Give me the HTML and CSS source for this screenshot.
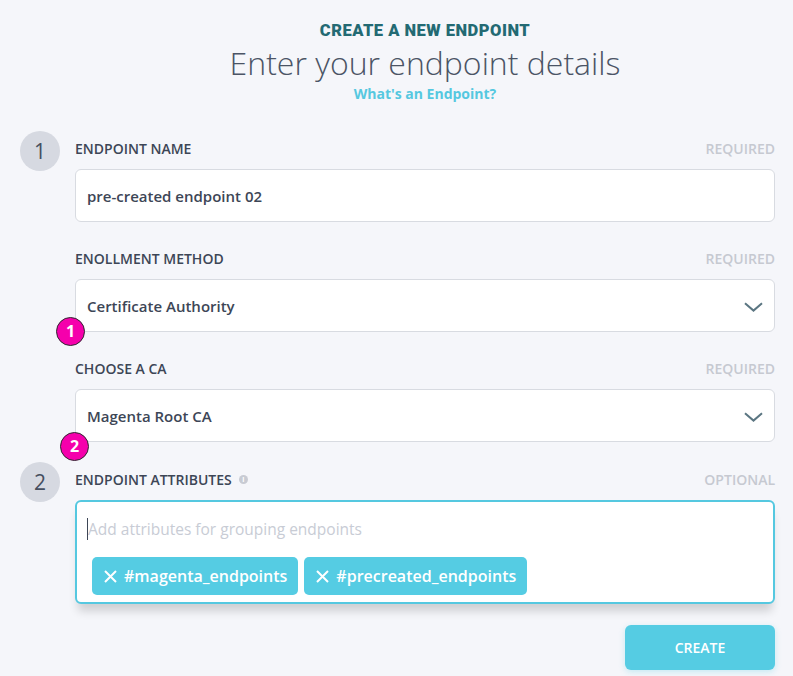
FILE: index.html
```html
<!DOCTYPE html>
<html>
<head>
<meta charset="utf-8">
<link rel="stylesheet" href="styles.css">
</head>
<body>
<div class="page">
  <header class="header">
    <div class="eyebrow">CREATE A NEW ENDPOINT</div>
    <h1 class="title">Enter your endpoint details</h1>
    <a class="help-link">What's an Endpoint?</a>
  </header>

  <section class="step">
    <div class="step-num">1</div>
    <div class="step-fields">
      <div class="field">
        <div class="field-head"><span class="label">ENDPOINT NAME</span><span class="hint">REQUIRED</span></div>
        <div class="input">pre-created endpoint 02</div>
      </div>
      <div class="field">
        <div class="field-head"><span class="label">ENOLLMENT METHOD</span><span class="hint">REQUIRED</span></div>
        <div class="input select">Certificate Authority
          <svg class="chevron" width="19" height="10" viewBox="0 0 19 10"><path d="M1 1.2 L9.5 8.6 L18 1.2" fill="none" stroke="#5b7682" stroke-width="2"/></svg>
          <span class="badge badge-1">1</span>
        </div>
      </div>
      <div class="field">
        <div class="field-head"><span class="label">CHOOSE A CA</span><span class="hint">REQUIRED</span></div>
        <div class="input select">Magenta Root CA
          <svg class="chevron" width="19" height="10" viewBox="0 0 19 10"><path d="M1 1.2 L9.5 8.6 L18 1.2" fill="none" stroke="#5b7682" stroke-width="2"/></svg>
          <span class="badge badge-2">2</span>
        </div>
      </div>
    </div>
  </section>

  <section class="step">
    <div class="step-num">2</div>
    <div class="step-fields">
      <div class="field">
        <div class="field-head"><span class="label">ENDPOINT ATTRIBUTES <span class="info">i</span></span><span class="hint">OPTIONAL</span></div>
        <div class="tag-box">
          <div class="placeholder"><span class="caret"></span>Add attributes for grouping endpoints</div>
          <div class="tags">
            <span class="tag"><svg class="x" width="13" height="13" viewBox="0 0 13 13"><path d="M1 1 L12 12 M12 1 L1 12" stroke="#fff" stroke-width="2"/></svg>#magenta_endpoints</span>
            <span class="tag"><svg class="x" width="13" height="13" viewBox="0 0 13 13"><path d="M1 1 L12 12 M12 1 L1 12" stroke="#fff" stroke-width="2"/></svg>#precreated_endpoints</span>
          </div>
        </div>
      </div>
    </div>
  </section>

  <div class="actions">
    <button class="btn">CREATE</button>
  </div>
</div>
</body>
</html>
```

FILE: styles.css
```css
* { box-sizing: border-box; }
html, body {
  margin: 0;
  background: #f5f6fa;
  font-family: "Open Sans", "Liberation Sans", sans-serif;
  color: #3d4656;
}
.page {
  width: 793px;
  height: 676px;
  overflow: hidden;
  padding: 0 18px 0 20px;
}
.header {
  text-align: center;
  padding-top: 21px;
  margin-left: 55px;
}
.eyebrow {
  font-family: Roboto, "DejaVu Sans", sans-serif;
  font-weight: 900;
  font-size: 16.5px;
  line-height: 20px;
  letter-spacing: 0.5px;
  color: #236a73;
}
.title {
  margin: 4px 0 0;
  font-weight: 300;
  font-size: 32px;
  line-height: 36px;
  color: #4b5465;
}
.help-link {
  display: block;
  margin-top: 4px;
  font-weight: 700;
  font-size: 14px;
  line-height: 18px;
  color: #55c8e0;
}
.step {
  display: flex;
  gap: 15px;
}
.header + .step { margin-top: 35px; }
.step + .step { margin-top: 27px; }
.step-num {
  flex: 0 0 40px;
  width: 40px;
  height: 40px;
  border-radius: 50%;
  background: #d6d9e1;
  color: #464f5f;
  font-size: 21px;
  line-height: 40px;
  text-align: center;
  margin-top: -7px;
}
.step-fields {
  flex: 1;
  display: flex;
  flex-direction: column;
  gap: 26px;
}
.field-head {
  display: flex;
  justify-content: space-between;
  align-items: center;
  height: 20px;
  margin-bottom: 11px;
}
.label {
  font-size: 14px;
  font-weight: 600;
  color: #3d4656;
  display: flex;
  align-items: center;
  gap: 6px;
}
.hint {
  font-size: 14px;
  font-weight: 600;
  color: #c6c9d1;
}
.info {
  display: inline-block;
  width: 9px;
  height: 9px;
  border-radius: 50%;
  background: #c8cbd3;
  color: #fff;
  font-size: 7px;
  font-weight: 700;
  line-height: 9px;
  text-align: center;
  margin-left: 1px;
}
.input {
  position: relative;
  height: 53px;
  background: #fff;
  border: 1.5px solid #d8dbe1;
  border-radius: 6px;
  padding: 0 11px;
  display: flex;
  align-items: center;
  font-size: 15px;
  font-weight: 600;
  color: #3d4656;
}
.chevron {
  position: absolute;
  right: 11px;
  top: 22px;
}
.badge {
  position: absolute;
  width: 29px;
  height: 29px;
  border-radius: 50%;
  background: #f500ac;
  border: 1.5px solid #2e2a30;
  color: #fff;
  font-size: 16px;
  font-weight: 700;
  line-height: 26px;
  text-align: center;
}
.badge-1 { left: -20px; top: 37px; }
.badge-2 { left: -16px; top: 42px; }
.tag-box {
  position: relative;
  height: 104px;
  background: #fff;
  border: 2px solid #55c8e0;
  border-radius: 6px;
  padding: 15px 15px 0 11px;
  box-shadow: 0 10px 10px -3px rgba(0, 0, 0, 0.16);
}
.placeholder {
  position: relative;
  font-size: 15.5px;
  line-height: 24px;
  color: #c8ccd5;
  height: 24px;
}
.caret {
  position: absolute;
  left: -1px;
  top: 1px;
  width: 1.3px;
  height: 22px;
  background: #3d4656;
}
.tags {
  display: flex;
  gap: 6px;
  margin-top: 16px;
  padding-left: 4px;
}
.tag {
  display: inline-flex;
  align-items: center;
  gap: 7px;
  height: 38px;
  padding: 0 11px 0 12px;
  background: #55cce3;
  border-radius: 5px;
  color: #fff;
  font-size: 16px;
  font-weight: 600;
}
.actions {
  display: flex;
  justify-content: flex-end;
  margin-top: 21px;
}
.btn {
  width: 150px;
  height: 45px;
  border: none;
  border-radius: 6px;
  background: #55cce3;
  color: #fff;
  font-family: "Open Sans", sans-serif;
  font-size: 14px;
  font-weight: 600;
  box-shadow: 0 2px 6px rgba(85, 204, 227, 0.3);
}
```
